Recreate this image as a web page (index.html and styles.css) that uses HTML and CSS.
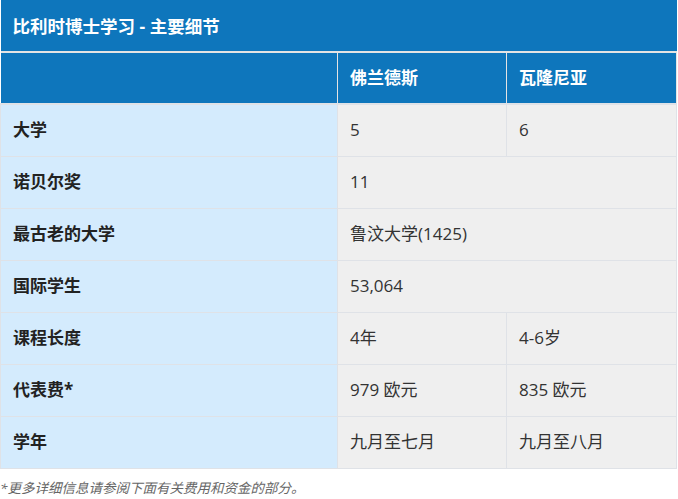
FILE: index.html
```
<!DOCTYPE html>
<html lang="zh">
<head>
<meta charset="utf-8">
<link rel="stylesheet" href="styles.css">
</head>
<body>
<table class="facts">
  <colgroup><col class="c1"><col class="c2"><col class="c3"></colgroup>
  <thead>
    <tr class="title-row"><th colspan="3">比利时博士学习 - 主要细节</th></tr>
    <tr class="head-row"><th></th><th>佛兰德斯</th><th>瓦隆尼亚</th></tr>
  </thead>
  <tbody>
    <tr><th>大学</th><td>5</td><td>6</td></tr>
    <tr><th>诺贝尔奖</th><td colspan="2">11</td></tr>
    <tr><th>最古老的大学</th><td colspan="2">鲁汶大学(1425)</td></tr>
    <tr><th>国际学生</th><td colspan="2">53,064</td></tr>
    <tr><th>课程长度</th><td>4年</td><td>4-6岁</td></tr>
    <tr><th>代表费*</th><td>979 欧元</td><td>835 欧元</td></tr>
    <tr><th>学年</th><td>九月至七月</td><td>九月至八月</td></tr>
  </tbody>
</table>
<p class="note">*更多详细信息请参阅下面有关费用和资金的部分。</p>
</body>
</html>
```
FILE: styles.css
```
html, body { margin: 0; padding: 0; background: #fff; }
body {
  font-family: "Open Sans", "Noto Sans CJK SC", sans-serif;
  font-size: 17px;
  color: #333;
}
.facts {
  border-collapse: collapse;
  table-layout: fixed;
  width: 676px;
}
.c1 { width: 337px; }
.c2 { width: 169px; }
.c3 { width: 170px; }
.facts tr { height: 52px; }
.facts th, .facts td {
  padding: 0 12px;
  text-align: left;
  vertical-align: middle;
  border: 1px solid #dfe2e7;
  line-height: 22px;
}
.title-row th {
  background: #0e76bc;
  color: #fff;
  font-weight: bold;
  font-size: 17.5px;
  border: none;
  border-bottom: 2px solid #e4e4e4;
}
.head-row th {
  background: #0e76bc;
  color: #fff;
  font-weight: bold;
  border-color: #e4e4e4;
  border-top: none;
  border-bottom: 2px solid #dfe2e7;
}
.head-row th:first-child { border-left: none; }
tbody th {
  background: #d4ebfd;
  color: #222;
  font-weight: bold;
  border-left: none;
}
tbody td {
  background: #efefef;
  color: #333;
}
.note {
  margin: 11px 0 0;
  font-size: 13.5px;
  line-height: 17px;
  font-style: italic;
  color: #666;
}
```
